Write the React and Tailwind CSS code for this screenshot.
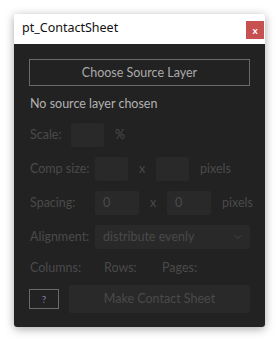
import { ChevronDown } from "lucide-react";

const font = { fontFamily: 'Lato, "Noto Sans", sans-serif' };

function Box({ w, children }) {
  return (
    <div className={`${w} flex h-[24px] shrink-0 items-center rounded-[2px] bg-[#292929] pl-[8px] text-[#4a4a4a]`}>
      {children}
    </div>
  );
}

export default function App() {
  return (
    <div className="min-h-[342px] bg-white pl-[14px] pt-[14px]" style={font}>
      <div className="w-[251px] overflow-hidden rounded-[3px] shadow-[0_2px_10px_rgba(0,0,0,0.35)]">
        <div className="flex h-[30px] items-start justify-between bg-white">
          <span
            className="pl-[8px] pt-[6px] text-[12.5px] leading-[16px] text-[#111]"
            style={{ fontFamily: '"Noto Sans", sans-serif' }}
          >
            pt_ContactSheet
          </span>
          <div className="mr-[1px] mt-[7px] flex h-[18px] w-[18px] items-center justify-center bg-[#c75050] text-[10px] font-bold leading-none text-white">
            x
          </div>
        </div>

        <div className="bg-[#222222] px-[15px] pb-[14px] pt-[15px] text-[12.5px] leading-[16px]">
          <div className="flex h-[27px] items-center justify-center border border-[#6a6a6a] text-[#aaaaaa]">
            Choose Source Layer
          </div>

          <div className="mt-[10px] pl-[1px] text-[#b2b2b2]">No source layer chosen</div>

          <div className="mt-[11px] flex items-center text-[#4a4a4a]">
            <span className="w-[42px] shrink-0 pl-[1px]">Scale:</span>
            <Box w="w-[33px]" />
            <span className="ml-[11px]">%</span>
          </div>

          <div className="mt-[10px] flex items-center text-[#4a4a4a]">
            <span className="w-[66px] shrink-0 pl-[1px]">Comp size:</span>
            <Box w="w-[33px]" />
            <span className="ml-[11px] w-[17px] shrink-0">x</span>
            <Box w="w-[33px]" />
            <span className="ml-[11px]">pixels</span>
          </div>

          <div className="mt-[10px] flex items-center text-[#4a4a4a]">
            <span className="w-[66px] shrink-0 pl-[1px]">Spacing:</span>
            <Box w="w-[44px]">0</Box>
            <span className="ml-[11px] w-[17px] shrink-0">x</span>
            <Box w="w-[44px]">0</Box>
            <span className="ml-[11px] whitespace-nowrap">pixels</span>
          </div>

          <div className="mt-[10px] flex items-center text-[#4a4a4a]">
            <span className="w-[66px] shrink-0 pl-[1px]">Alignment:</span>
            <div className="flex h-[24px] flex-1 items-center justify-between rounded-[2px] bg-[#292929] pl-[8px] pr-[6px]">
              <span>distribute evenly</span>
              <ChevronDown size={12} strokeWidth={1.5} />
            </div>
          </div>

          <div className="mt-[11px] flex items-center text-[#4a4a4a]">
            <span className="w-[75px] shrink-0 pl-[1px]">Columns:</span>
            <span className="w-[58px] shrink-0">Rows:</span>
            <span>Pages:</span>
          </div>

          <div className="mt-[9px] flex items-center gap-[10px]">
            <div className="flex h-[20px] w-[30px] shrink-0 items-center justify-center border border-[#6a6a6a] text-[10px] text-[#8080b0]">
              ?
            </div>
            <div className="flex h-[28px] flex-1 items-center justify-center rounded-[2px] bg-[#292929] text-[#4a4a4a]">
              Make Contact Sheet
            </div>
          </div>
        </div>
      </div>
    </div>
  );
}
